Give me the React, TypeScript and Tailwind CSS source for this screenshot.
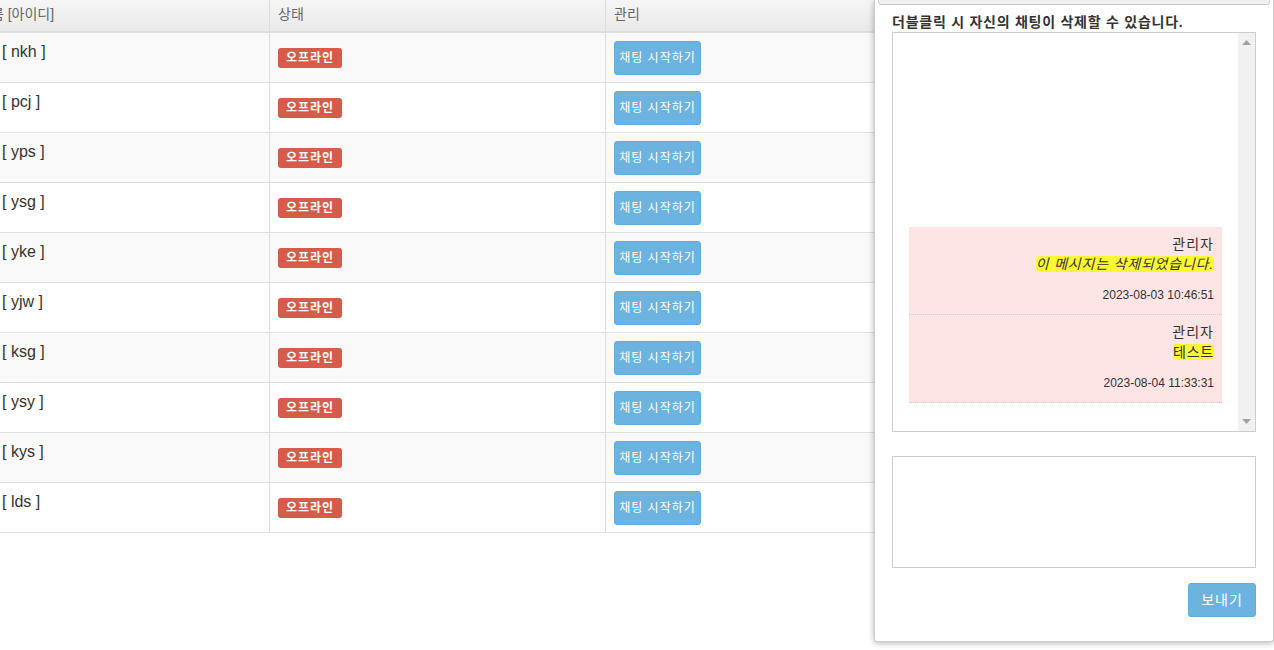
import React from "react";

const ids = ["nkh", "pcj", "yps", "ysg", "yke", "yjw", "ksg", "ysy", "kys", "lds"];

const font = { fontFamily: '"Liberation Sans", "Noto Sans CJK KR", sans-serif' };

function Row({ id, i }: { id: string; i: number }) {
  const bg = i % 2 === 0 ? "bg-[#f9f9f9]" : "bg-white";
  return (
    <div className={`grid grid-cols-[270px_336px_1fr] h-[50px] border-b border-[#dddddd] ${bg}`}>
      <div className="border-r border-[#dddddd] pl-[2px] pt-[9px] text-[16px] leading-[20px] text-[#333]">[ {id} ]</div>
      <div className="border-r border-[#dddddd] pl-[8px] flex items-center">
        <span className="inline-flex items-center h-[20px] px-[8px] rounded-[3px] bg-[#d65b4a] text-white text-[12px] font-bold leading-none tracking-[1px]">오프라인</span>
      </div>
      <div className="pl-[8px] flex items-center">
        <button className="h-[34px] w-[87px] rounded-[3px] bg-[#6cb3e0] border border-[#5eaedd] text-white text-[12px] leading-none tracking-[1px]">채팅 시작하기</button>
      </div>
    </div>
  );
}

function Msg({ text, date, italic }: { text: string; date: string; italic?: boolean }) {
  return (
    <div className="bg-[#fde5e5] border-b border-dotted border-[#cccccc] pt-[7px] pb-[10px] pr-[8px] text-right text-[14px] leading-[20px] text-[#333]">
      <div className="tracking-[1px]">관리자</div>
      <div>
        <span className={`bg-[#fdf735] rounded-[4px] tracking-[0.8px] ${italic ? "italic" : ""}`}>{text}</span>
      </div>
      <div className="mt-[13px] text-[12px] leading-[17px]">{date}</div>
    </div>
  );
}

export default function App() {
  return (
    <div className="flex items-start w-[1274px] h-[650px] bg-white overflow-hidden" style={font}>
      <div className="w-[874px] shrink-0 overflow-hidden">
        <div className="grid grid-cols-[270px_336px_1fr] h-[33px] border-b-2 border-[#dddddd] bg-gradient-to-b from-[#f6f6f6] to-[#e9e9e9] text-[14px] leading-[20px] text-[#666]">
          <div className="border-r border-[#dddddd] pt-[4px] whitespace-nowrap"><span className="ml-[-22px]">이름 [아이디]</span></div>
          <div className="border-r border-[#dddddd] pl-[8px] pt-[4px]">상태</div>
          <div className="pl-[8px] pt-[4px]">관리</div>
        </div>
        {ids.map((id, i) => (
          <Row key={id} id={id} i={i} />
        ))}
      </div>
      <div className="relative z-10 w-[400px] shrink-0 h-[642px] bg-white border border-t-0 border-[#cccccc] rounded-b-[3px] shadow-[0_1px_6px_rgba(0,0,0,0.3)] px-[17px]">
        <div className="mx-[-14px] h-[5px] bg-[#f0f0f0] border border-t-0 border-[#cccccc] rounded-b-[4px]" />
        <div className="mt-[7px] text-[14px] leading-[20px] font-bold text-[#333] tracking-[0.75px]">더블클릭 시 자신의 채팅이 삭제할 수 있습니다.</div>
        <div className="h-[400px] border border-[#cccccc] flex">
          <div className="flex-1 flex flex-col justify-end pl-[16px] pr-[16px] pb-[26px]">
            <div className="mb-[2px]">
              <Msg text="이 메시지는 삭제되었습니다." date="2023-08-03 10:46:51" italic />
              <Msg text="테스트" date="2023-08-04 11:33:31" />
            </div>
          </div>
          <div className="w-[17px] bg-[#f1f1f1] flex flex-col justify-between items-center py-[7px]">
            <svg width="9" height="5" viewBox="0 0 9 5"><polygon points="4.5,0 9,5 0,5" fill="#a3a3a3" /></svg>
            <svg width="9" height="5" viewBox="0 0 9 5"><polygon points="0,0 9,0 4.5,5" fill="#a3a3a3" /></svg>
          </div>
        </div>
        <div className="mt-[24px] h-[112px] border border-[#cccccc]" />
        <div className="mt-[15px] flex justify-end">
          <button className="h-[34px] w-[68px] rounded-[3px] bg-[#6cb3e0] border border-[#5eaedd] text-white text-[14px] leading-none tracking-[1px]">보내기</button>
        </div>
      </div>
    </div>
  );
}
